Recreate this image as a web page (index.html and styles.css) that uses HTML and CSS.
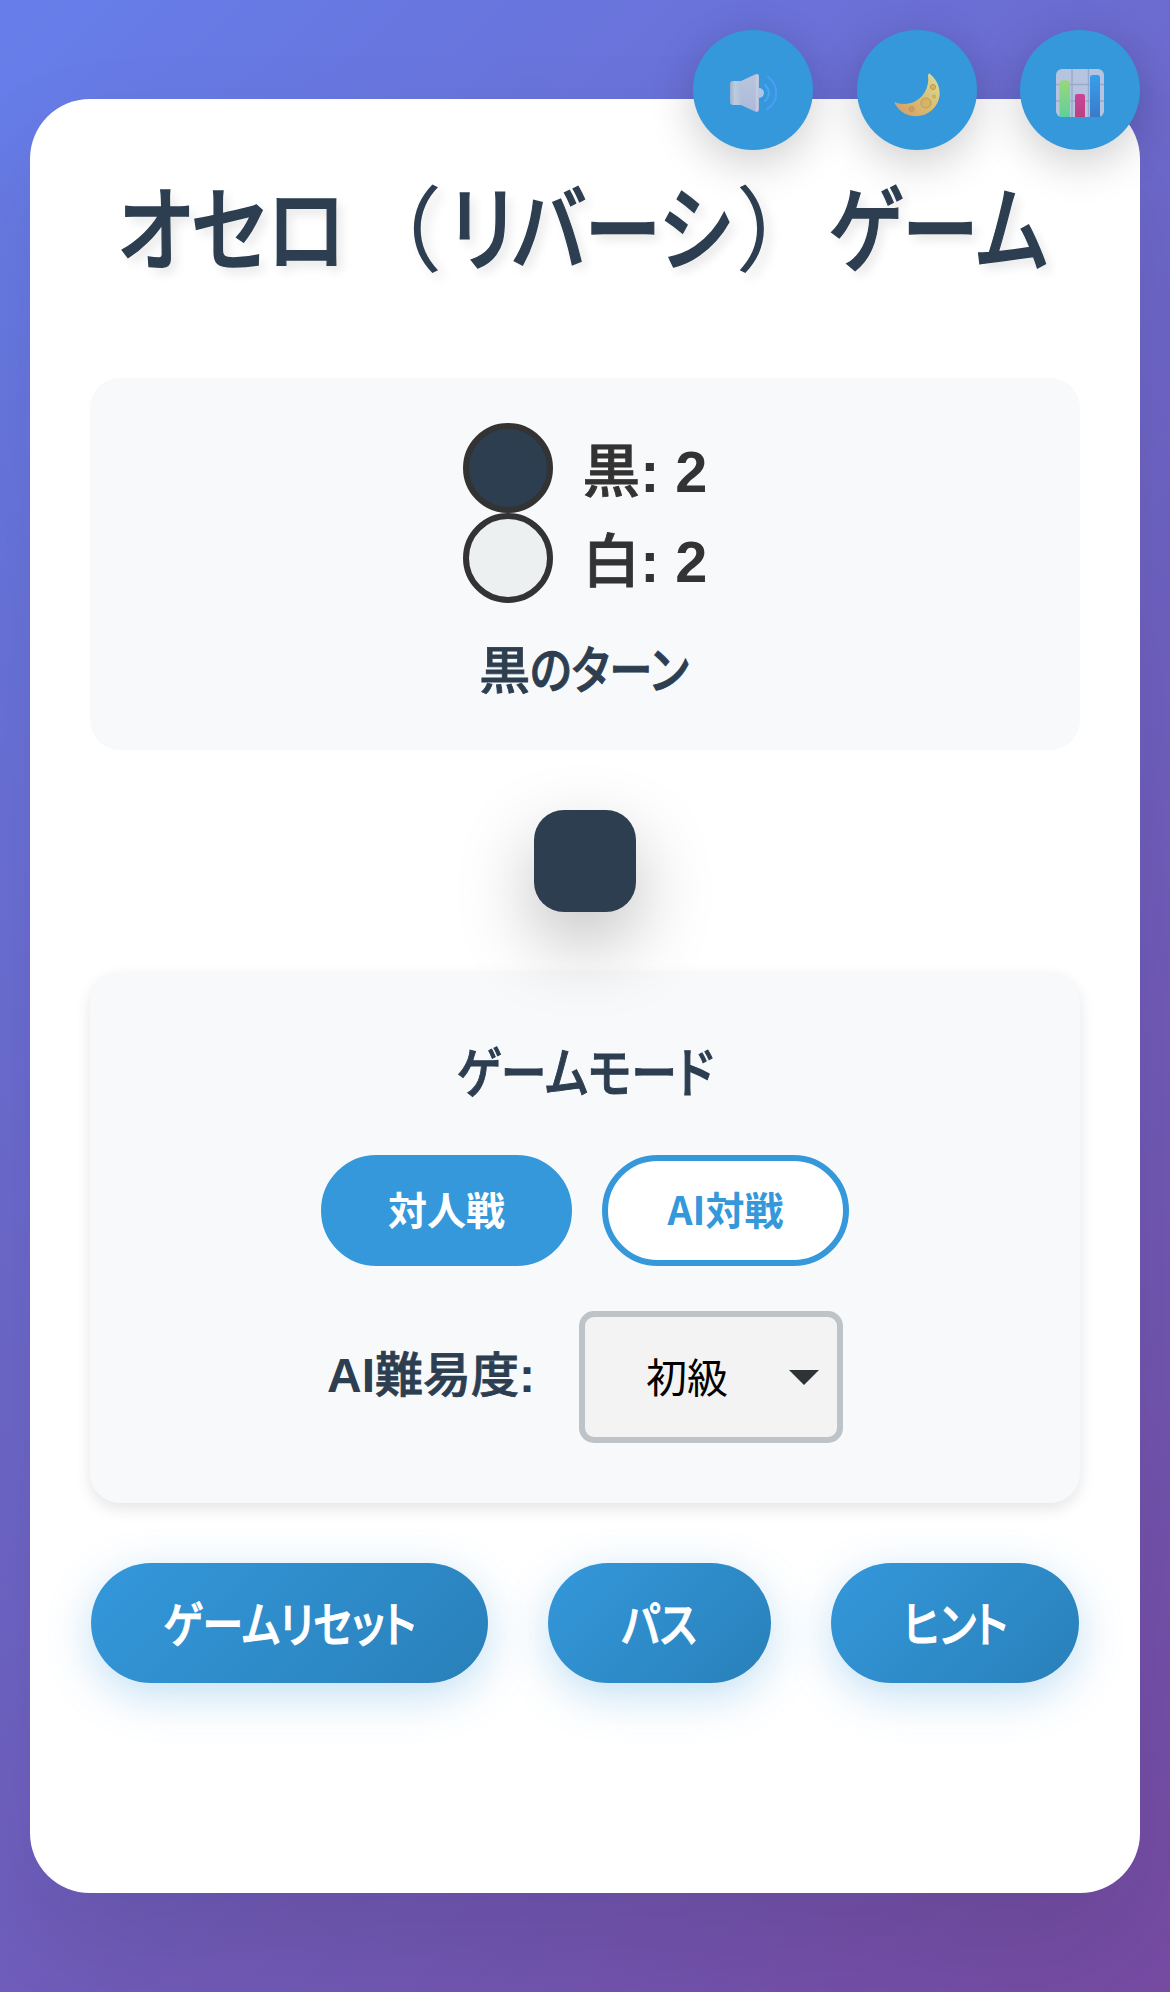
FILE: index.html
```html
<!DOCTYPE html>
<html lang="ja">
<head>
<meta charset="utf-8">
<title>オセロ（リバーシ）ゲーム</title>
<link rel="stylesheet" href="styles.css">
</head>
<body>
<div class="toolbar">
  <button class="round" aria-label="サウンド">
    <svg width="48" height="48" viewBox="0 0 48 48">
      <defs>
        <linearGradient id="cone" x1="0" y1="0" x2="0" y2="1"><stop offset="0" stop-color="#bac5dc"/><stop offset="1" stop-color="#adb9da"/></linearGradient>
        <linearGradient id="box" x1="0" y1="0" x2="1" y2="0"><stop offset="0" stop-color="#9eb0cd"/><stop offset=".35" stop-color="#bccbe0"/><stop offset="1" stop-color="#a9bcd8"/></linearGradient>
      </defs>
      <circle cx="30" cy="24" r="5" fill="#a9c8e5"/>
      <rect x="1" y="12" width="14" height="24" rx="3" fill="url(#box)"/>
      <path d="M12 12 L26 5.500 Q30 4 30 8 V40 Q30 44 26 42.500 L12 36 Z" fill="url(#cone)"/>
      <path d="M28 7 V41" stroke="#c2cbe2" stroke-width="2.500" stroke-linecap="round"/>
      <path d="M36 16 Q44 24 36 32" fill="none" stroke="#4da3f5" stroke-width="2" stroke-linecap="round"/>
      <path d="M39 8 C50 16 50 33 38 40" fill="none" stroke="#4a9cf4" stroke-width="2.200" stroke-linecap="round"/>
    </svg>
  </button>
  <button class="round" aria-label="ダークモード">
    <svg width="48" height="48" viewBox="0 0 48 48">
      <defs><linearGradient id="moon" x1="0" y1="1" x2="1" y2="0"><stop offset="0" stop-color="#d49a69"/><stop offset=".5" stop-color="#dbbd70"/><stop offset="1" stop-color="#d9dda0"/></linearGradient></defs>
      <path d="M37 5 C49 15 50 31 39 41 C28 51 10 49 2 35 C1 33 2 33 4 34 C25 39 37 22 35 7 C35 5 36 4 37 5 Z" fill="url(#moon)"/>
      <g fill="#d3b566" stroke="#be9b58" stroke-width="1"><circle cx="33" cy="34" r="5"/><circle cx="40" cy="18" r="2.600"/><circle cx="18.500" cy="40" r="2.600" fill="#cd9a61"/><circle cx="41" cy="27.500" r="1.600" stroke-width=".6"/></g>
    </svg>
  </button>
  <button class="round" aria-label="統計">
    <svg width="48" height="48" viewBox="0 0 48 48">
      <defs>
        <linearGradient id="g1" x1="0" y1="0" x2="0" y2="1"><stop offset="0" stop-color="#98d878"/><stop offset="1" stop-color="#60cf9d"/></linearGradient>
        <linearGradient id="g2" x1="0" y1="0" x2="0" y2="1"><stop offset="0" stop-color="#cb4498"/><stop offset="1" stop-color="#b84380"/></linearGradient>
        <linearGradient id="g3" x1="0" y1="0" x2="0" y2="1"><stop offset="0" stop-color="#35a0ec"/><stop offset="1" stop-color="#397bcb"/></linearGradient>
      </defs>
      <rect width="48" height="48" rx="6" fill="#b6c4df"/>
      <path d="M16 0V48M32.500 0V48M0 15.500H48M0 32H48" stroke="#98a9cb" stroke-width="1.400"/>
      <path d="M3.500 48V14Q3.500 11.500 6 11.500H11.500Q14 11.500 14 14V48Z" fill="url(#g1)"/>
      <path d="M19 48V27Q19 25 21 25H27Q29 25 29 27V48Z" fill="url(#g2)"/>
      <path d="M34 48V8.500Q34 6 36.500 6H41.500Q44 6 44 8.500V48Z" fill="url(#g3)"/>
    </svg>
  </button>
</div>
<main class="card">
  <h1 class="title"><span class="word first">オセロ</span><span class="paren">（</span><span class="word">リバーシ</span><span class="paren close">）</span><span class="word">ゲーム</span></h1>
  <section class="score">
    <div class="row"><i class="disc black"></i><b><span class="kanji">黒</span>: 2</b></div>
    <div class="row"><i class="disc white"></i><b><span class="kanji">白</span>: 2</b></div>
    <div class="turn"><span class="kanji">黒</span><span class="kana">のターン</span></div>
  </section>
  <div class="board"></div>
  <section class="settings">
    <h2 class="subtitle"><span class="kana">ゲームモード</span></h2>
    <div class="modes">
      <button class="mode active">対人戦</button>
      <button class="mode">AI対戦</button>
    </div>
    <div class="level">
      <span class="label">AI<span class="kanji">難易度</span>:</span>
      <div class="select"><span>初級</span><svg width="30" height="15" viewBox="0 0 30 15"><path d="M0 0H30L15 15Z" fill="#2e3436"/></svg></div>
    </div>
  </section>
  <div class="actions">
    <button class="action reset"><span class="kana">ゲームリセット</span></button>
    <button class="action pass"><span class="kana">パス</span></button>
    <button class="action hint"><span class="kana">ヒント</span></button>
  </div>
</main>
</body>
</html>
```
FILE: styles.css
```css
* { box-sizing: border-box; }
body {
  margin: 0;
  height: 1992px;
  padding: 99px 30px;
  background: linear-gradient(135deg, #667eea 0%, #764ba2 100%);
  font-family: "Liberation Sans", "Noto Sans CJK JP", sans-serif;
  color: #333;
}
button { border: 0; padding: 0; font-family: inherit; }
h1, h2 { margin: 0; }
svg { display: block; }
.toolbar {
  position: absolute;
  top: 30px;
  right: 30px;
  display: flex;
  gap: 43.500px;
}
.round {
  width: 120px;
  height: 120px;
  display: flex;
  align-items: center;
  justify-content: center;
  padding-top: 6px;
  border-radius: 50%;
  background: #3498db;
  box-shadow: 0 12px 45px rgba(0, 0, 0, .2);
}
.card {
  height: 1794px;
  padding: 60px;
  border-radius: 60px;
  background: #fff;
  box-shadow: 0 60px 120px rgba(0, 0, 0, .1);
}
.title {
  height: 219px;
  display: flex;
  justify-content: center;
  white-space: nowrap;
  font-family: "Noto Sans CJK JP", sans-serif;
  font-size: 93px;
  line-height: 129px;
  font-weight: 500;
  color: #2c3e50;
  font-feature-settings: "palt";
  text-shadow: 6px 6px 12px rgba(0, 0, 0, .1);
}
.word { transform: scaleX(.825); -webkit-text-stroke: 1.500px currentColor; }
.first { transform: scaleX(.86); margin-right: 29px; }
.paren { font-weight: 400; margin-right: -19px; }
.close { margin-left: -21px; margin-right: 20px; }
.score {
  height: 372px;
  padding-top: 45px;
  border-radius: 30px;
  background: #f8f9fb;
}
.row {
  height: 90px;
  display: flex;
  align-items: center;
  justify-content: center;
  gap: 30px;
  font-size: 57.600px;
}
.row b { padding-bottom: 2px; }
.kanji { font-weight: 500; -webkit-text-stroke: .8px currentColor; }
.disc {
  width: 90px;
  height: 90px;
  border: 6px solid #333;
  border-radius: 50%;
}
.black { background: #2c3e50; }
.white { background: #ecf0f1; }
.kana {
  display: inline-block;
  transform: scaleX(.85);
  font-family: "Noto Sans CJK JP", sans-serif;
  font-weight: 500;
  font-feature-settings: "palt";
  -webkit-text-stroke: 1px currentColor;
}
.turn {
  padding-top: 28px;
  text-align: center;
  font-family: "Noto Sans CJK JP", sans-serif;
  font-size: 51px;
  line-height: 72px;
  color: #2c3e50;
}
.turn .kana { margin-right: -26px; transform-origin: left; }
.board {
  position: relative;
  width: 102px;
  height: 102px;
  margin: 60px auto;
  border-radius: 30px;
  background: #2c3e50;
  box-shadow: 0 30px 75px rgba(0, 0, 0, .25);
}
.settings {
  height: 531px;
  padding-top: 59px;
  border-radius: 30px;
  background: #f8f9fb;
  box-shadow: 0 6px 15px rgba(0, 0, 0, .1);
}
.subtitle {
  height: 124px;
  text-align: center;
  font-size: 54px;
  line-height: 78px;
  color: #2c3e50;
}
.modes { display: flex; justify-content: center; gap: 30px; }
.mode {
  width: 247px;
  height: 111px;
  padding-bottom: 5px;
  border: 6px solid #3498db;
  border-radius: 60px;
  background: #fff;
  color: #3498db;
  font-family: "Noto Sans CJK JP", sans-serif;
  font-size: 39px;
  font-weight: 700;
}
.active { width: 251px; background: #3498db; color: #fff; }
.level {
  margin-top: 45px;
  display: flex;
  align-items: center;
  justify-content: center;
  gap: 44px;
}
.label { padding-bottom: 12px; font-size: 48px; font-weight: 700; color: #2c3e50; }
.select {
  width: 264px;
  height: 132px;
  padding: 0 18px 0 61px;
  display: flex;
  align-items: center;
  justify-content: space-between;
  border: 6px solid #bdc3c7;
  border-radius: 15px;
  background: #f3f3f3;
  color: #000;
  font-size: 41px;
}
.select span { padding-bottom: 4px; }
.actions { display: flex; justify-content: center; gap: 60px; margin-top: 60px; }
.action {
  height: 120px;
  padding-bottom: 5px;
  display: flex;
  align-items: center;
  justify-content: center;
  border-radius: 75px;
  background: linear-gradient(135deg, #3498db, #2980b9);
  box-shadow: 0 12px 45px rgba(52, 152, 219, .3);
  color: #fff;
  font-size: 48px;
  white-space: nowrap;
}
.reset { width: 397px; }
.pass { width: 223px; }
.hint { width: 248px; }
```
